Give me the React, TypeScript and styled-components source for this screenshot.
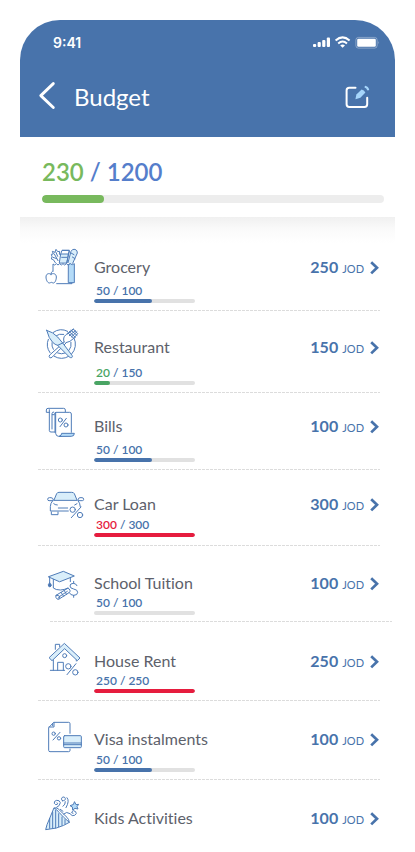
import React from "react";
import styled, { createGlobalStyle } from "styled-components";

const blue = "#4873ab";

const GlobalStyle = createGlobalStyle`
  * { box-sizing: border-box; }
  body { margin: 0; background: #fff; font-family: Lato, "Open Sans", sans-serif; font-variant-ligatures: none; }
  button { border: 0; padding: 0; background: none; color: inherit; font: inherit; cursor: pointer; }
  svg { display: block; }
`;

const Screen = styled.main`
  margin: 20px 20px 0;
`;

const Header = styled.header`
  height: 117px;
  border-radius: 40px 40px 0 0;
  background: ${blue};
  color: #fff;
`;

const StatusBar = styled.div`
  display: flex;
  align-items: center;
  justify-content: space-between;
  padding: 14px 15px 0 33px;
`;

const Time = styled.span`
  font: 600 14px/18px Inter, sans-serif;
`;

const TitleBar = styled.div`
  display: flex;
  align-items: center;
  padding: 28px 25px 0 18px;
`;

const IconButton = styled.button`
  display: flex;
`;

const Title = styled.h1`
  flex: 1;
  margin: 0 0 0 18px;
  font-size: 24px;
  line-height: 34px;
  font-weight: 400;
`;

const Summary = styled.section`
  padding: 20px 11px 14px 22px;
`;

const Total = styled.p<{ $tone: string }>`
  margin: 0 0 8px;
  color: ${(p) => p.$tone};
  font-size: 24px;
  line-height: 30px;
  font-weight: 600;
`;

const Spent = styled.span<{ $tone: string }>`
  color: ${(p) => p.$tone};
`;

const Track = styled.div<{ $size: number; $tone: string }>`
  height: ${(p) => p.$size}px;
  border-radius: ${(p) => p.$size / 2}px;
  background: ${(p) => p.$tone};
  overflow: hidden;
`;

const Fill = styled.div<{ $tone: string }>`
  height: 100%;
  border-radius: inherit;
  background: ${(p) => p.$tone};
`;

const List = styled.ul`
  list-style: none;
  margin: 0;
  padding: 0 15px 0 18px;
  background: linear-gradient(#f0f0f0, #fafafa 12px, #fff 26px) no-repeat;
`;

const Row = styled.li<{ $top: number; $bottom: number }>`
  display: grid;
  grid-template-columns: 52px 1fr auto;
  padding: ${(p) => p.$top}px 0 ${(p) => p.$bottom}px 4px;
`;

const Divider = styled.li<{ $shift?: boolean }>`
  height: 1px;
  margin: ${(p) => (p.$shift ? "0 -12px 0 12px" : "0")};
  background: repeating-linear-gradient(90deg, #dcdcdc 0 3px, #fff 3px 4px);
`;

const Details = styled.div`
  padding-top: 14px;
`;

const Name = styled.h2`
  margin: 0 0 2px;
  color: #5d616b;
  font-size: 16px;
  line-height: 18px;
  font-weight: 400;
`;

const Usage = styled.p<{ $gap: number }>`
  margin: 0 0 0 2px;
  padding-top: ${(p) => p.$gap}px;
  color: ${blue};
  font-size: 12px;
  line-height: 16px;
  font-weight: 600;
`;

const Meter = styled.div`
  width: 101px;
`;

const Amount = styled.button`
  display: flex;
  align-self: start;
  align-items: baseline;
  gap: 4px;
  margin: 14px 1px 0 0;
  color: ${blue};
  line-height: 18px;
`;

const Value = styled.strong`
  font-size: 16px;
`;

const Currency = styled.span`
  font-size: 11px;
  margin-right: 2px;
`;

const Chevron = styled.svg`
  overflow: visible;
`;

const Art = styled.svg`
  width: 44px;
  height: 40px;
  overflow: visible;
  fill: none;
  stroke: #4f7cb8;
  stroke-width: 3;
  stroke-linecap: round;
  stroke-linejoin: round;
  & .tint { fill: #d9eefa; }
  & .deep { fill: #b4dbf8; }
  & .solid { fill: #4c77b2; }
`;

const Grocery = () => (
  <Art viewBox="21 12 132 120" aria-hidden="true">
    <path d="M54 94V72l5 3 5-4 5 4 5-4 5 4 5-4 5 4 5-4 5 4 6-4 6 4v56H65" />
    <path className="deep" d="M101 74l5-3 6 3 6-3v57h-17z" />
    <path d="M48 103c-6-5-15-2-15 8 0 9 5 18 10 18 3 0 4-2 6-2s3 2 6 2c5 0 9-9 9-18 0-10-10-13-16-8zM48 102q0-6 4-8" />
    <path d="M61 68l-6-9-6-2 2-7-2-7 6-1-3-8 8 3 3-9 5 7 6-1-1 8 4 4M58 42l11 20M63 37l5 12M54 52l11 4" />
    <path className="tint" d="M73 68l4-26h23l-4 26z" />
    <path d="M77 42l4-11h22l-3 11M82 31h20M80 52h15M95 68l8-34" />
    <path className="tint" d="M99 68l9-34q4-8 12-6 8 3 7 11L113 70" />
    <path d="M108 39l9 5M112 51l8 5" />
  </Art>
);

const Restaurant = () => (
  <Art viewBox="21 12 132 120" aria-hidden="true">
    <path d="M55 37a41 41 0 0 1 43-3M117 54a42 42 0 0 1-7 48M101 109a42 42 0 0 1-43 0M45 98a41 41 0 0 1-5-40M62 48a29 29 0 0 1 24-5M108 67a29 29 0 0 1-6 24M91 99a29 29 0 0 1-23 0M55 88a29 29 0 0 1-4-20" />
    <path d="M87 66q-4-14 5-21l8-7 15-11 13 14-13 15q-9 10-22 12M88 66l-44 39q-3 5 0 8 4 2 8-2l42-43M99 39l18 17M103 35l18 17M108 31l18 15M103 47l18-15M109 51l17-16M98 42l18-15" />
    <path className="tint" d="M35 31q19 5 33 20l15 18 28 37q3 5-1 7-4 1-8-3L68 76q-8-2-15-9-11-10-18-36z" />
    <path d="M68 76l15-7" />
  </Art>
);

const Bills = () => (
  <Art viewBox="21 15 132 120" aria-hidden="true">
    <path d="M44 43H34v-7q0-5 5-5h47q5 0 5 5v5M43 35v63q0 4 5 4h11M51 93V47q0-5 5-5M60 103V50q-3-7 3-7h41q5 0 5 5v55" />
    <path d="M62 46v60q1 9 9 9h7M58 50h-6" />
    <path className="deep" d="M73 115q7-2 7-9h38q0 9-8 9z" />
    <circle cx="76" cy="66" r="6" /><circle cx="93" cy="81" r="6" /><path d="M94 61L75 86" />
  </Art>
);

const Car = () => (
  <Art viewBox="21 9 132 120" aria-hidden="true">
    <path className="tint" d="M57 66l8-19q2-4 7-4h38q6 0 8 4l8 19z" />
    <path d="M55 65q-1-6-7-6h-5q-5 0-5 5 0 4 4 4h12M129 65q1-6 6-6h6q5 0 5 5 0 4-4 4h-12M53 68q-7 8-7 18v13h54M129 68q6 6 7 18M56 77q3 4 11 4M49 102v8h20v-8M126 77l-7 4M70 90h28" />
    <circle cx="113" cy="95" r="8" /><circle cx="135" cy="111" r="8" /><path d="M138 87l-29 32" />
  </Art>
);

const School = () => (
  <Art viewBox="21 12 132 120" aria-hidden="true">
    <path className="tint" d="M41 62l44-16 33 14-43 17z" />
    <path d="M55 70v26q7 6 21 6 11 0 23-6M106 67v10M44 63v18" />
    <path className="solid" d="M44 81q5 2 5 8l-4 4q-6-1-5-7 1-4 4-5z" />
    <path d="M63 118l35-21q5 0 7 6 1 4-3 7l-31 20q-6 0-8-5-2-4 1-7zM65 119q6-3 9 2 1 5-3 8M70 124l27-18M78 109l8 12M88 104l7 12" />
    <path d="M126 89q-3-7-11-7-10 0-10 8 0 7 11 9 12 2 12 10 0 9-12 9-10 0-13-8M116 76v6M116 118v6" />
  </Art>
);

const House = () => (
  <Art viewBox="21 18 132 120" aria-hidden="true">
    <path d="M61 52V37h13v7M55 83v32M46 115h43M68 115V91h17v24M124 81v6" />
    <path className="tint" d="M89 35l46 43-8 8-38-36-38 36-8-8z" />
    <circle cx="89" cy="71" r="6" />
    <circle cx="100" cy="103" r="8" /><circle cx="121" cy="121" r="8" /><path d="M123 95l-27 33" />
  </Art>
);

const Visa = () => (
  <Art viewBox="21 24 132 120" aria-hidden="true">
    <path d="M105 76V47q0-4-4-4H56L41 59v68q0 4 4 4h56q4 0 4-4v-4M57 44v13H42M53 47v6" />
    <circle cx="56" cy="77" r="5" /><circle cx="72" cy="91" r="5" /><path d="M75 73L54 96" />
    <rect className="tint" x="86" y="83" width="53" height="36" rx="3" /><path d="M86 105h53M86 110h53" />
  </Art>
);

const Kids = () => (
  <Art viewBox="21 39 132 120" aria-hidden="true">
    <path className="tint" d="M58 78q5 2 15 14t30 29q-15 10-39 17l-32 5q2-13 12-34z" />
    <path d="M53 91v47M62 85v53M71 95v39M81 105v25M90 113v13M44 109v30M58 78q6-2 11 2l27 26q6 6 7 15" />
    <path d="M65 76q10-4 11-14-2-8-11-7-9 2-7 9 3 6 9 3 3-3-1-5M84 73q8-6 7-14M82 56a6 6 0 1 1 9-7q1 8-9 7zM96 47q9 9-3 30M86 96q9-9 19-1 6 9 14 5 8-5 3-11-8-7-12 1 0 4 4 4M76 82l8 6" />
    <path className="deep" d="M119 60l4 8 8-1-5 7 3 7-9-2-7 5-1-9-7-4 9-3z" />
  </Art>
);

type Item = {
  name: string; icon: React.FC; amount: number; spent?: string; limit?: string;
  spentTone?: string; fill?: number; fillTone?: string;
  top: number; gap?: number; bottom?: number; shift?: boolean;
};

const items: Item[] = [
  { name: "Grocery", icon: Grocery, amount: 250, spent: "50", limit: "100", fill: 57, top: 27, gap: 5, bottom: 7 },
  { name: "Restaurant", icon: Restaurant, amount: 150, spent: "20", limit: "150", spentTone: "#4aa564", fill: 16, fillTone: "#4aa564", top: 13, gap: 7, bottom: 7 },
  { name: "Bills", icon: Bills, amount: 100, spent: "50", limit: "100", fill: 57, top: 10, gap: 5, bottom: 7 },
  { name: "Car Loan", icon: Car, amount: 300, spent: "300", limit: "300", spentTone: "#e61c3e", fill: 100, fillTone: "#e61c3e", top: 11, gap: 2, bottom: 8 },
  { name: "School Tuition", icon: School, amount: 100, spent: "50", limit: "100", fill: 0, top: 14, gap: 1, bottom: 6, shift: true },
  { name: "House Rent", icon: House, amount: 250, spent: "250", limit: "250", fill: 100, fillTone: "#e61c3e", top: 16, gap: 1, bottom: 7 },
  { name: "Visa instalments", icon: Visa, amount: 100, spent: "50", limit: "100", fill: 57, top: 15, gap: 2, bottom: 7 },
  { name: "Kids Activities", icon: Kids, amount: 100, top: 15 },
];

const Progress = ({ label, percent, size, track, tone }: { label: string; percent: number; size: number; track: string; tone: string }) => (
  <Track $size={size} $tone={track} role="progressbar" aria-label={label} aria-valuenow={percent}>
    <Fill $tone={tone} style={{ width: `${percent}%` }} />
  </Track>
);

export default function App() {
  return (
    <>
      <GlobalStyle />
      <Screen>
        <Header>
          <StatusBar>
            <Time>9:41</Time>
            <svg width="68" height="14" viewBox="0 0 68 14" fill="#fff" aria-hidden="true">
              <rect x="1" y="8" width="3.2" height="3" rx="1" />
              <rect x="5.6" y="6" width="3.2" height="5" rx="1" />
              <rect x="10.2" y="4" width="3.2" height="7" rx="1" />
              <rect x="14.8" y="1.5" width="3.2" height="9.5" rx="1" />
              <g fill="none" stroke="#fff" strokeWidth="2">
                <path d="M23.6 4.4q7-6 14 0M26.2 7.4q4.4-3.7 8.8 0" />
              </g>
              <path d="M28.2 9.4q2.4-1.8 4.8 0l-2.4 2.3z" />
              <rect x="43.9" y="1.4" width="21.2" height="10.7" rx="2.5" fill="none" stroke="#fff" strokeOpacity=".35" />
              <rect x="45.2" y="2.8" width="18.6" height="8" rx="1.3" />
              <path d="M66.5 5q1.2 1.6 0 3.2z" opacity=".5" />
            </svg>
          </StatusBar>
          <TitleBar>
            <IconButton aria-label="Back">
              <svg width="18" height="34" viewBox="0 0 18 34" fill="none" stroke="#fff" strokeWidth="2.9" strokeLinecap="round" strokeLinejoin="round">
                <path d="M15.3 3.6L2.8 15.6l12.5 11.9" />
              </svg>
            </IconButton>
            <Title>Budget</Title>
            <IconButton aria-label="Edit budget">
              <svg width="26" height="24" viewBox="0 0 26 24" fill="none" stroke="#fff" strokeWidth="2" strokeLinecap="round">
                <path d="M11.5 2.7H5.3Q2.6 2.7 2.6 5.2v14.1q0 2.6 2.7 2.6h15.2q2.7 0 2.7-2.6v-6.5" />
                <path d="M11.4 14.2l1-4.7 5.2-5.1q2.5.2 3.8 3.2l-5 5.2z" fill="#a5d5fb" stroke="none" />
                <path d="M21.7 2q1.6.5 2.3 2.3" stroke="#a5d5fb" strokeWidth="2.3" />
              </svg>
            </IconButton>
          </TitleBar>
        </Header>
        <Summary>
          <Total $tone="#557ecb"><Spent $tone="#78b95d">230</Spent> / 1200</Total>
          <Progress label="Total budget spent" percent={18} size={8} track="#ededed" tone="#78b95d" />
        </Summary>
        <List>
          {items.map(({ icon: Icon, ...item }) => (
            <React.Fragment key={item.name}>
              <Row $top={item.top} $bottom={item.bottom ?? 0}>
                <Icon />
                <Details>
                  <Name>{item.name}</Name>
                  {item.spent && (
                    <>
                      <Usage $gap={item.gap ?? 0}>
                        <Spent $tone={item.spentTone ?? blue}>{item.spent}</Spent> / {item.limit}
                      </Usage>
                      <Meter>
                        <Progress label={item.name} percent={item.fill ?? 0} size={4} track="#e1e1e1" tone={item.fillTone ?? blue} />
                      </Meter>
                    </>
                  )}
                </Details>
                <Amount aria-label={`${item.name} ${item.amount} JOD`}>
                  <Value>{item.amount}</Value>
                  <Currency>JOD</Currency>
                  <Chevron width="9" height="12" viewBox="0 0 9 12" fill="none" stroke={blue} strokeWidth="2.7">
                    <path d="M1.2 1.2l5.8 5.6-5.8 5.6" />
                  </Chevron>
                </Amount>
              </Row>
              {item.spent && <Divider $shift={item.shift} role="separator" />}
            </React.Fragment>
          ))}
        </List>
      </Screen>
    </>
  );
}
